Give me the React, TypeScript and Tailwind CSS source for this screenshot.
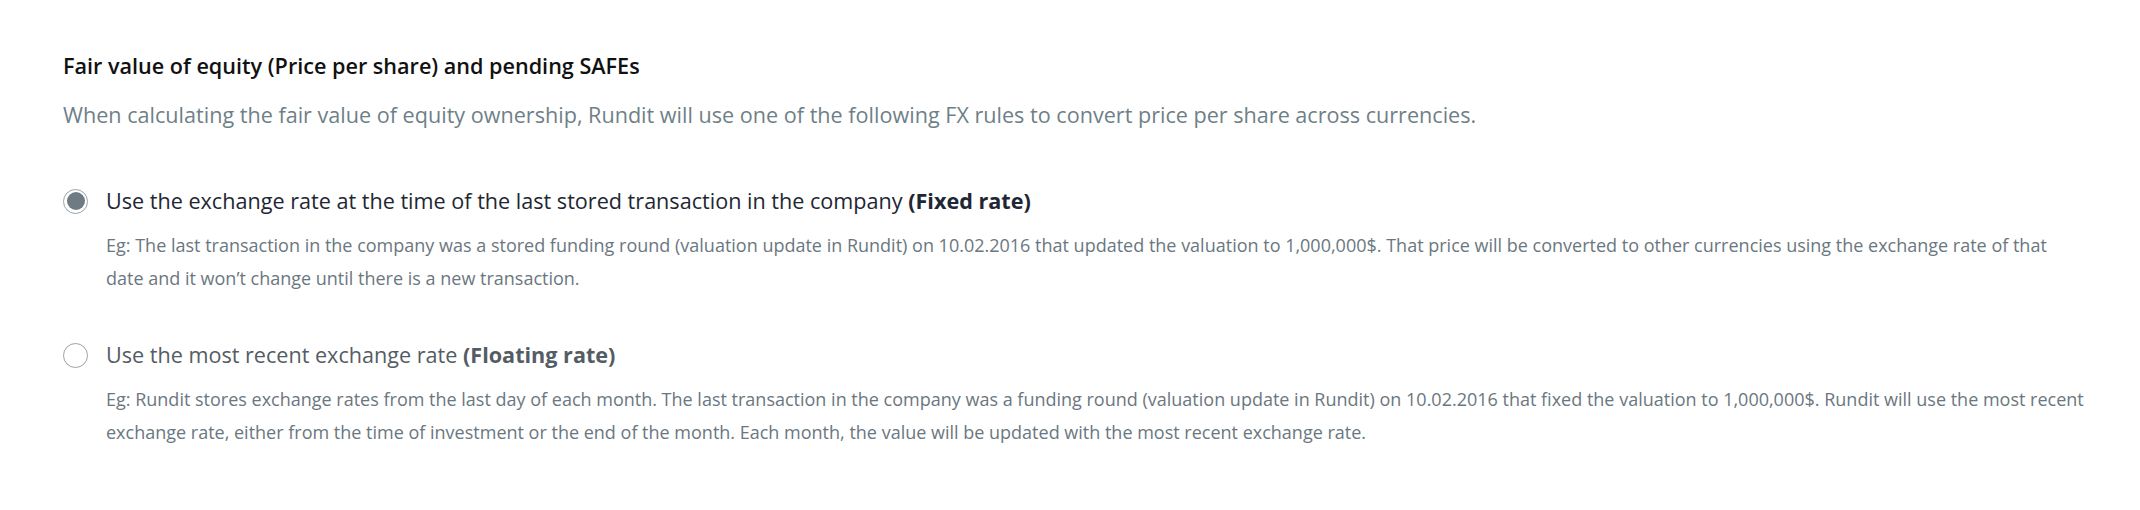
import React from "react";

function Radio({ checked }: { checked: boolean }) {
  return (
    <span className="flex h-[25px] w-[25px] shrink-0 items-center justify-center rounded-full border border-[#9aa3a8] bg-white">
      {checked ? <span className="h-[18px] w-[18px] rounded-full bg-[#6e7b82]" /> : null}
    </span>
  );
}

export default function App() {
  return (
    <div
      className="min-h-[510px] bg-white pl-[63px] pr-[52px] pt-[52px]"
      style={{ fontFamily: '"Open Sans", "Noto Sans", sans-serif' }}
    >
      <h2 className="text-[21.6px] leading-[28px] font-semibold text-[#111111]">
        Fair value of equity (Price per share) and pending SAFEs
      </h2>
      <p className="mt-[20px] text-[21.6px] leading-[30px] text-[#6f7f88]">
        When calculating the fair value of equity ownership, Rundit will use one of the following FX rules to convert price per share across currencies.
      </p>

      <div className="mt-[57px] flex flex-col gap-[46px]">
        <div>
          <label className="flex items-center gap-[18px]">
            <Radio checked />
            <span className="text-[21.6px] leading-[28px] text-[#1e2733]">
              Use the exchange rate at the time of the last stored transaction in the company{" "}
              <span className="font-bold">(Fixed rate)</span>
            </span>
          </label>
          <p className="mt-[14px] pl-[43px] text-[18px] leading-[33px] text-[#6b7780]">
            Eg: The last transaction in the company was a stored funding round (valuation update in Rundit) on 10.02.2016 that updated the valuation to 1,000,000$. That price will be converted to other currencies using the exchange rate of that date and it won’t change until there is a new transaction.
          </p>
        </div>

        <div>
          <label className="flex items-center gap-[18px]">
            <Radio checked={false} />
            <span className="text-[21.6px] leading-[28px] text-[#545c64]">
              Use the most recent exchange rate <span className="font-bold">(Floating rate)</span>
            </span>
          </label>
          <p className="mt-[14px] pl-[43px] text-[18px] leading-[33px] text-[#6b7780]">
            Eg: Rundit stores exchange rates from the last day of each month. The last transaction in the company was a funding round (valuation update in Rundit) on 10.02.2016 that fixed the valuation to 1,000,000$. Rundit will use the most recent exchange rate, either from the time of investment or the end of the month. Each month, the value will be updated with the most recent exchange rate.
          </p>
        </div>
      </div>
    </div>
  );
}
